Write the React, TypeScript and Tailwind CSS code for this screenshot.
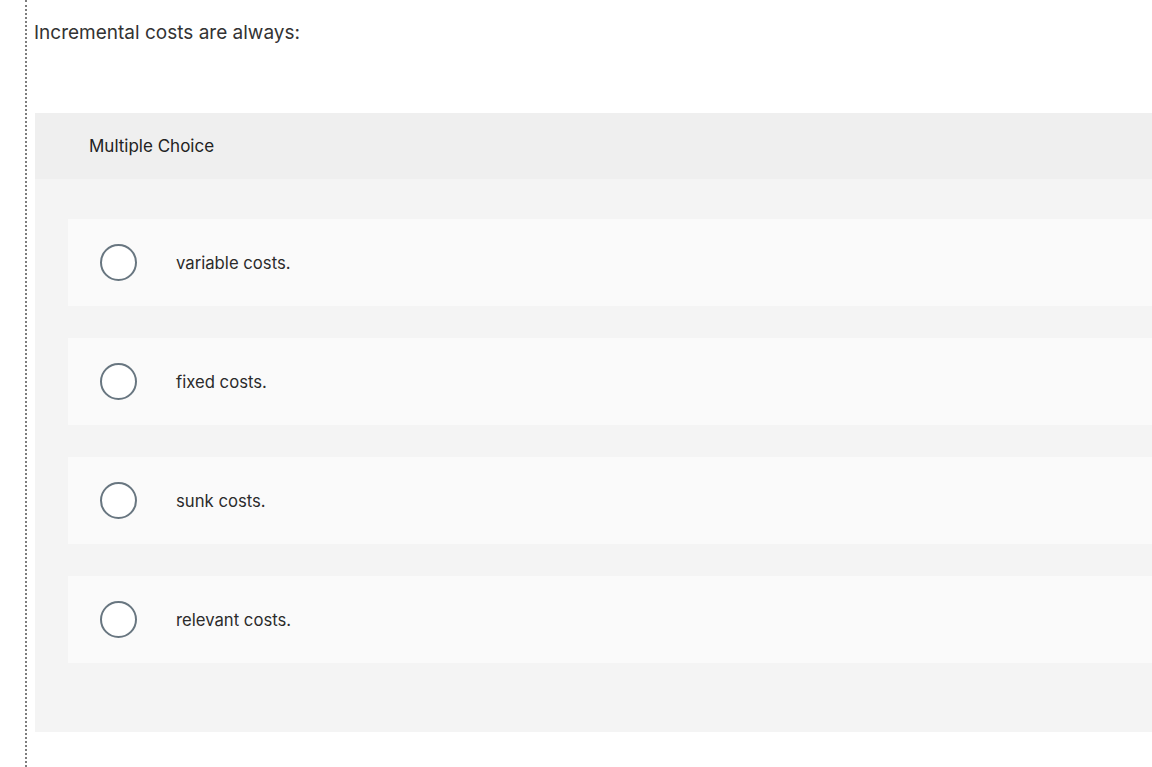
const options = ["variable costs.", "fixed costs.", "sunk costs.", "relevant costs."];

const Radio = () => (
    <span className="block w-[37px] h-[37px] rounded-full border-2 border-[#687680] bg-white shrink-0" />
);

export default function App() {
    return (
        <main className="min-h-screen bg-white font-['Inter','Open_Sans',sans-serif] text-[#333]">
            <div className="ml-[25px] min-h-screen border-l-2 border-dotted border-[#7d7d7d] pl-[7px] pt-[20px]">
                <h1 className="text-[19px] leading-[26px] text-[#333]">Incremental costs are always:</h1>

                <section className="mt-[67px] ml-[1px] bg-[#f4f4f4]">
                    <div className="h-[66px] flex items-center pl-[54px] pt-[2px] bg-[#efefef] text-[17px] text-[#222]">
                        Multiple Choice
                    </div>
                    <div className="pt-[40px] pb-[69px] pl-[33px] flex flex-col gap-[32px]">
                        {options.map(opt => (
                            <label key={opt} className="h-[87px] flex items-center pl-[32px] gap-[39px] bg-[#fafafa] cursor-pointer">
                                <Radio />
                                <span className="pt-[3px] text-[16.7px] text-[#2b2b2b] [font-variant-ligatures:none]">{opt}</span>
                            </label>
                        ))}
                    </div>
                </section>
            </div>
        </main>
    );
}
